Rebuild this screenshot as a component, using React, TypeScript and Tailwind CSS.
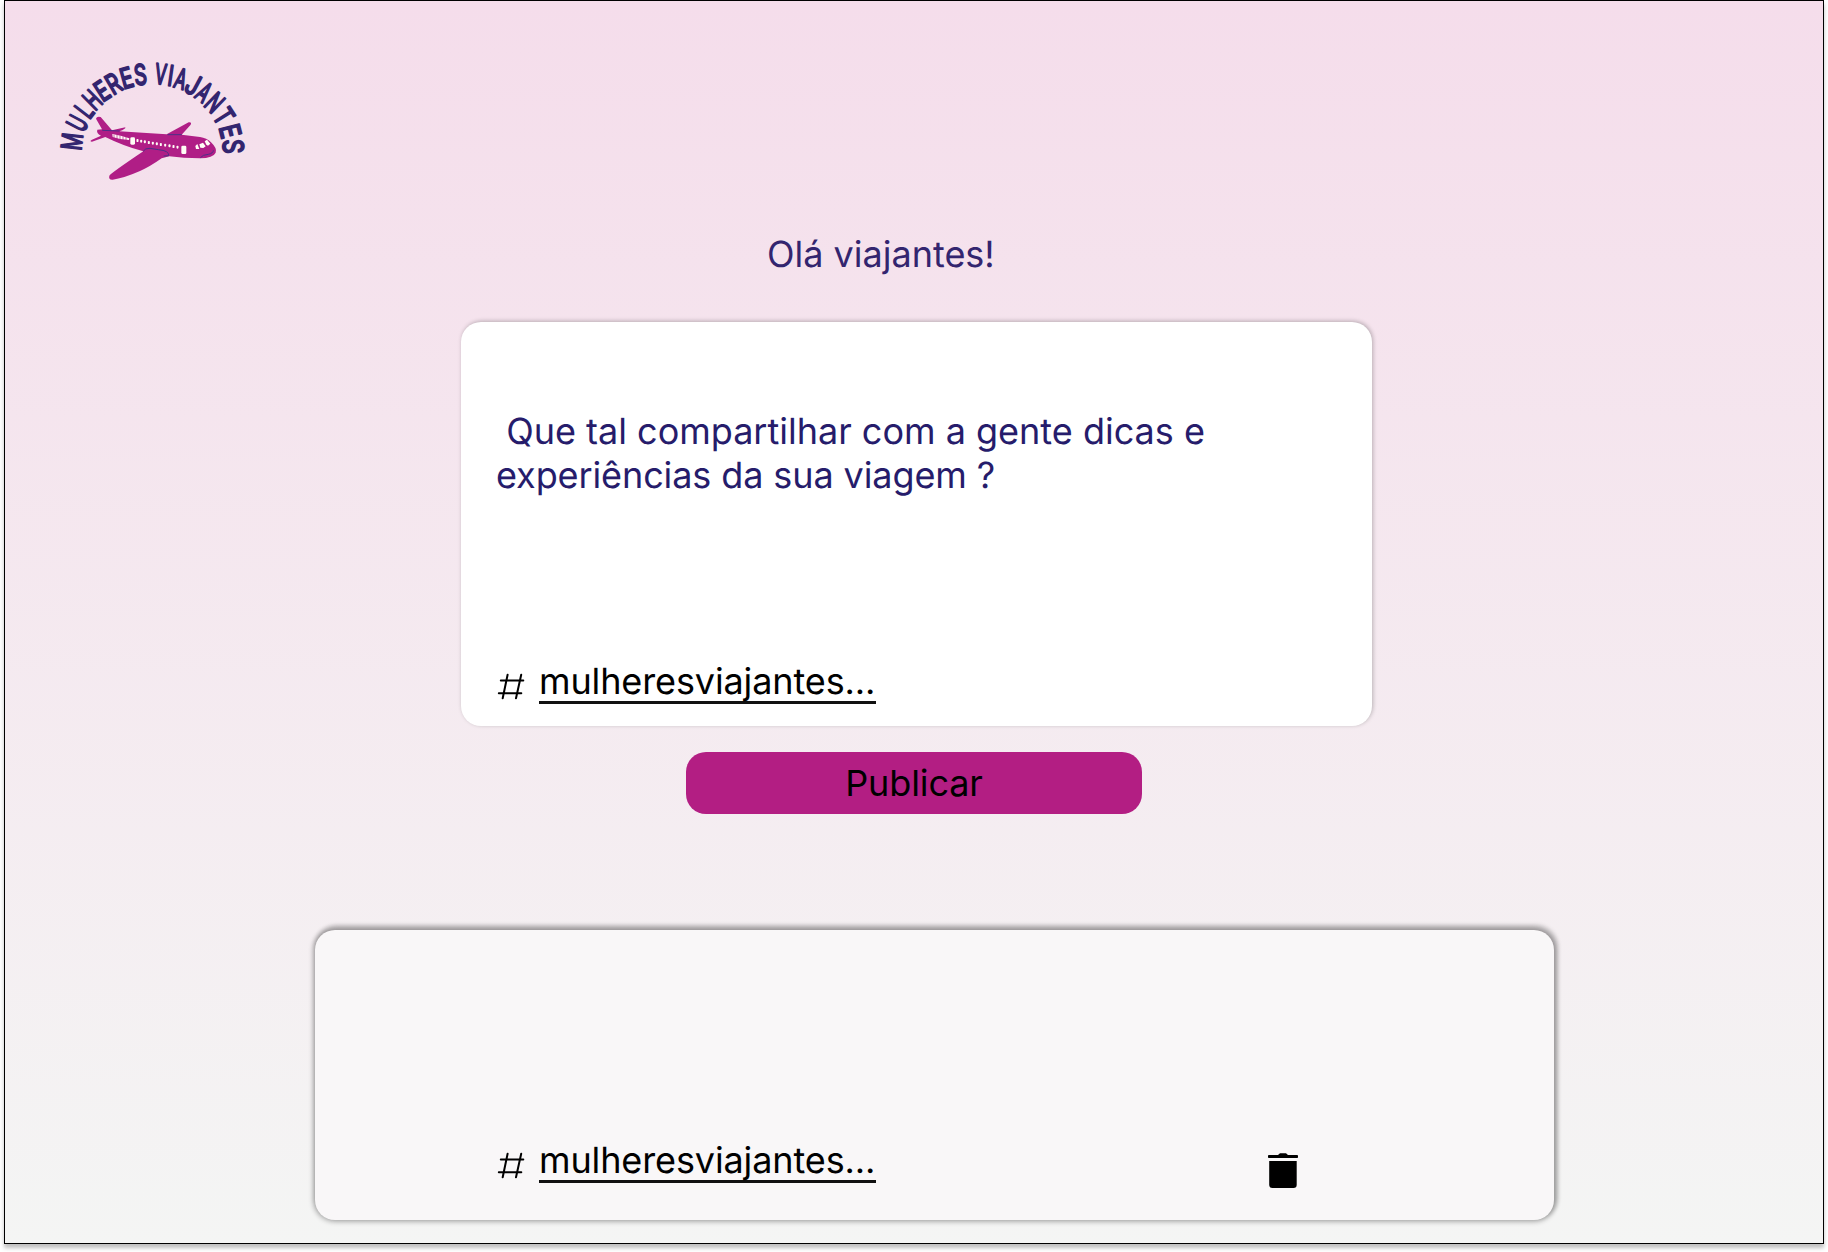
const arcLetters: { c: string; a: number; w: number; tilt: number }[] = [
  { c: 'M', a: -80.5, w: 0.66, tilt: -3 },
  { c: 'U', a: -67, w: 0.6, tilt: 5 },
  { c: 'L', a: -56.5, w: 0.64, tilt: 4 },
  { c: 'H', a: -47.5, w: 0.6, tilt: 3 },
  { c: 'E', a: -38, w: 0.72, tilt: 5 },
  { c: 'R', a: -28.5, w: 0.72, tilt: -2 },
  { c: 'E', a: -18.5, w: 0.74, tilt: 3 },
  { c: 'S', a: -8.5, w: 0.7, tilt: 2 },
  { c: 'V', a: 6, w: 0.6, tilt: 0 },
  { c: 'I', a: 13, w: 0.7, tilt: -5 },
  { c: 'A', a: 20.5, w: 0.6, tilt: -4 },
  { c: 'J', a: 30, w: 0.8, tilt: -2 },
  { c: 'A', a: 39.5, w: 0.6, tilt: -3 },
  { c: 'N', a: 50, w: 0.64, tilt: -6 },
  { c: 'T', a: 61.5, w: 0.74, tilt: -4 },
  { c: 'E', a: 73, w: 0.8, tilt: 3 },
  { c: 'S', a: 84, w: 0.8, tilt: 3 },
];

const windows = [292, 303, 314, 326, 338, 350, 362, 375, 388, 400, 412];

function Logo() {
  return (
    <svg viewBox="0 0 690 480" className="h-[160px] w-[230px]" role="img" aria-label="Mulheres Viajantes">
      <g
        fill="#33256f"
        stroke="#33256f"
        strokeWidth="6"
        strokeLinejoin="round"
        fontFamily="Inter, sans-serif"
        fontSize="84"
        fontWeight="400"
        textAnchor="middle"
      >
        {arcLetters.map((l, i) => (
          <text
            key={i}
            transform={`translate(337 345) rotate(${l.a}) translate(0 -245) rotate(${l.tilt}) translate(0 31) scale(${l.w} 1)`}
          >
            {l.c}
          </text>
        ))}
      </g>
      <path
        fill="#b01e86"
        d="M168 236Q170 228 182 231L216 271L256 262Q258 267 238 274L320 279L380 283L446 247Q456 246 452 254L425 284L480 291Q500 294 513 307Q532 325 527 338Q520 354 480 355Q430 355 388 349L365 355Q330 380 300 393Q250 415 218 419Q205 420 208 407Q215 398 310 334Q250 318 196 291L156 305Q147 303 156 299L183 287Q168 279 172 269L186 268Z"
      />
      <g fill="none" stroke="#4b3187" strokeWidth="3" strokeLinecap="round">
        <path d="M188 271L238 273M384 284L424 284M310 333Q315 324 330 325L355 329Q388 332 386 347L372 348" />
        <path d="M482 352Q488 344 505 343Q520 340 520 332" />
      </g>
      <g fill="#fffdf5">
        {windows.map((x, i) => (
          <rect key={x} x={x - 2.5} y={297 + i * 2} width="6" height="9" rx="2.5" />
        ))}
        <path d="M217 282L242 287L268 295L267 300L240 297L218 291Z" />
        <rect x="271" y="292" width="14" height="22" rx="4" />
        <rect x="424" y="317" width="15" height="25" rx="4" />
        <path d="M466 318L472 312L478 327L468 327ZM478 313L489 308L497 319L490 324L481 323ZM494 304L501 299L511 311L504 317L499 314Z" />
      </g>
      <path d="M222 284V296M231 285V298M240 286V300M249 289V300M258 291V302" stroke="#b01e86" strokeWidth="2" />
    </svg>
  );
}

function HashIcon() {
  return (
    <svg viewBox="0 0 28 27" className="mt-[14px] h-[27px] w-[28px] shrink-0" fill="none" stroke="#000" strokeWidth="2" strokeLinecap="round">
      <path d="M3.8 7.5H26.300M1.800 20.2H24.300M10.600 1.800L5.700 25.300M24.200 1.800L19 25.300" />
    </svg>
  );
}

function TrashIcon() {
  return (
    <svg viewBox="0 0 30 35" className="h-[35px] w-[30px]" fill="#000">
      <path d="M10 2L12 0.2H18L20 2H29.2Q30 2 30 3V4.200Q30 5 29.2 5H0.8Q0 5 0 4.200V3Q0 2 0.8 2Z" />
      <path d="M1.200 8H28.700V31.800Q28.700 35 25.500 35H4.400Q1.200 35 1.200 31.800Z" />
    </svg>
  );
}

function Hashtag() {
  return (
    <div className="flex items-start text-black">
      <HashIcon />
      <span className="ml-[14px] h-[45px] w-[337px] border-b-[3px] border-[#111] leading-[44px] tracking-[-0.12px] whitespace-nowrap">
        mulheresviajantes...
      </span>
    </div>
  );
}

export default function App() {
  return (
    <div className="h-[1252px] w-[1828px] overflow-hidden bg-white px-1 font-['Inter',sans-serif] text-[36px] leading-[44px] [text-rendering:geometricPrecision]">
      <main className="flex h-[1244px] w-[1820px] flex-col border border-black bg-linear-to-b from-[#f5ddeb] to-[#f4f5f4] shadow-[0_4px_4px_rgba(0,0,0,0.25)]">
        <header className="pt-[39px] pl-[35px]">
          <Logo />
        </header>
        <h1 className="mt-8 ml-[762px] text-[#33256f]">Olá viajantes!</h1>
        <section className="mt-[46px] ml-[456px] flex h-[404px] w-[911px] flex-col rounded-[20px] bg-white pt-[87px] pl-[35px] shadow-[1px_-1px_4px_rgba(0,0,0,0.25)]">
          <p className="h-[88px] whitespace-pre text-[#261c6b]">
            {' Que tal compartilhar com a gente dicas e\n'}
            <span className="tracking-[-0.1px]">experiências da sua viagem ?</span>
          </p>
          <div className="mt-[162px] ml-px">
            <Hashtag />
          </div>
        </section>
        <button className="mt-[26px] ml-[681px] flex h-[62px] w-[456px] items-center justify-center rounded-[20px] bg-[#b31e83] tracking-[-0.12px] text-black">
          Publicar
        </button>
        <section className="mt-[116px] ml-[310px] flex h-[290px] w-[1239px] items-start rounded-[20px] bg-[#f9f7f8] pt-[208px] pl-[182px] shadow-[0_0_5px_2px_rgba(0,0,0,0.27),2px_-3px_4px_2px_rgba(0,0,0,0.18)]">
          <Hashtag />
          <button className="mt-[15px] ml-[392px]" aria-label="Excluir">
            <TrashIcon />
          </button>
        </section>
      </main>
    </div>
  );
}
